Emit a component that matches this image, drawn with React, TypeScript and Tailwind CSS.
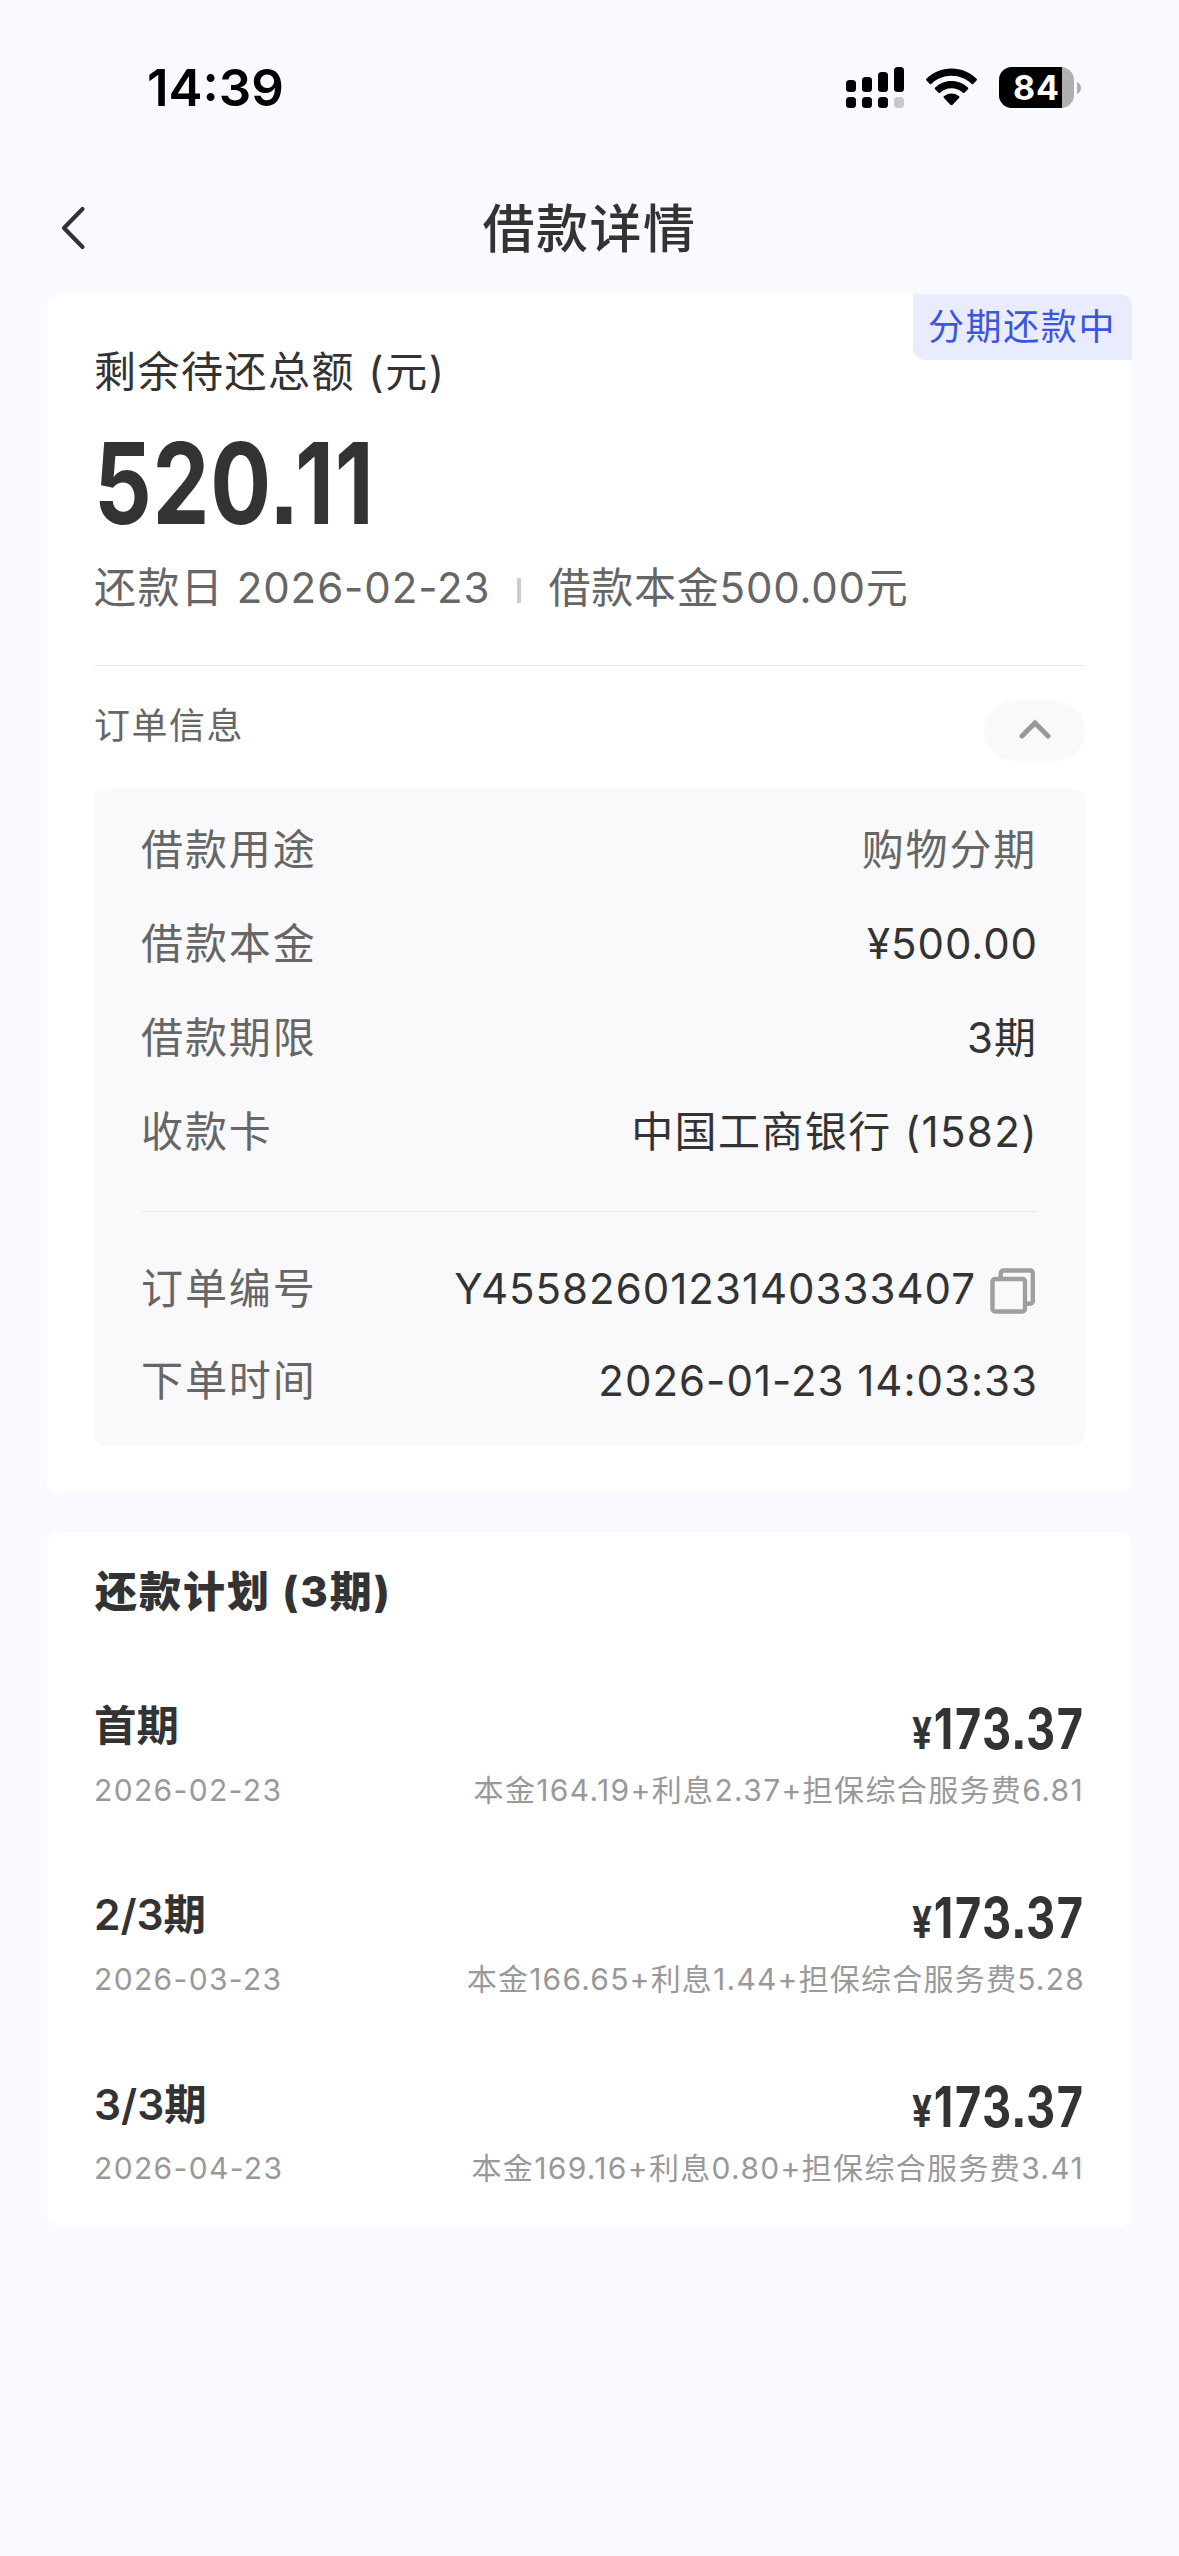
import React from "react";

type Plan = { term: string; date: string; desc: string; descTracking: string };

const loanRows = [
  { label: "借款用途", value: "购物分期", tone: "text-[#666] tracking-[1.8px] pr-[1px]" },
  { label: "借款本金", value: "¥500.00", tone: "text-[#333] tracking-[0.9px]" },
  { label: "借款期限", value: "3期", tone: "text-[#333] tracking-[1px] pr-[1px]" },
  { label: "收款卡", value: "中国工商银行 (1582)", tone: "text-[#333] tracking-[1.4px]" },
];

const plans: Plan[] = [
  { term: "首期", date: "2026-02-23", desc: "本金164.19+利息2.37+担保综合服务费6.81", descTracking: "tracking-[1.36px] pr-[1px]" },
  { term: "2/3期", date: "2026-03-23", desc: "本金166.65+利息1.44+担保综合服务费5.28", descTracking: "tracking-[1.22px]" },
  { term: "3/3期", date: "2026-04-23", desc: "本金169.16+利息0.80+担保综合服务费3.41", descTracking: "tracking-[1.34px] pr-[1px]" },
];

function SignalIcon() {
  return (
    <svg width="58" height="41" viewBox="0 0 58 41" fill="#000">
      <rect x="0" y="13" width="10" height="12" rx="3.5" />
      <rect x="16" y="10" width="10" height="15" rx="3.5" />
      <rect x="32" y="5" width="10" height="20" rx="3.5" />
      <rect x="48" y="0" width="10" height="25" rx="3.5" />
      <rect x="0" y="30" width="10" height="11" rx="3.5" />
      <rect x="16" y="30" width="10" height="11" rx="3.5" />
      <rect x="32" y="30" width="10" height="11" rx="3.5" />
      <rect x="48" y="30" width="10" height="11" rx="3.5" fill="#c8c8cb" />
    </svg>
  );
}

function WifiIcon() {
  return (
    <svg width="51" height="38" viewBox="0 0 51 38" fill="#000">
      <path d="M25.5 0.5C35.3 0.5 44.2 4.4 50.6 10.7C51.1 11.2 51.1 11.8 50.7 12.3L47.2 15.9C46.8 16.3 46.2 16.3 45.7 15.9C40.4 10.8 33.3 7.8 25.5 7.8C17.7 7.8 10.6 10.8 5.3 15.9C4.8 16.3 4.2 16.3 3.8 15.9L0.3 12.3C-0.1 11.8 -0.1 11.2 0.4 10.7C6.8 4.4 15.7 0.5 25.5 0.5Z" />
      <path d="M25.5 13C31.9 13 37.6 15.5 41.9 19.6C42.4 20.1 42.4 20.7 42 21.2L38.4 24.8C38 25.2 37.4 25.2 36.9 24.8C33.9 22 29.9 20.3 25.5 20.3C21.1 20.3 17.1 22 14.1 24.8C13.6 25.2 13 25.2 12.6 24.8L9 21.2C8.6 20.7 8.6 20.1 9.1 19.6C13.4 15.5 19.1 13 25.5 13Z" />
      <path d="M25.5 25.4C28.4 25.4 31.1 26.5 33.1 28.3C33.6 28.8 33.6 29.4 33.2 29.8L26.4 36.9C25.9 37.4 25.1 37.4 24.6 36.9L17.8 29.8C17.4 29.4 17.4 28.8 17.9 28.3C19.9 26.5 22.6 25.4 25.5 25.4Z" />
    </svg>
  );
}

function Battery() {
  return (
    <div className="flex items-center">
      <div className="flex h-[41px] w-[75px] overflow-hidden rounded-[13px] bg-[#b0b0b1]">
        <div className="h-full w-[63px] bg-black pl-[14px] text-[34px] leading-[42px] font-bold tracking-[0.8px] text-white">84</div>
      </div>
      <svg width="4" height="12" viewBox="0 0 4 12" className="ml-[3px]">
        <path d="M0 0C2.6 1 4 3.4 4 6C4 8.6 2.6 11 0 12Z" fill="#b0b0b1" />
      </svg>
    </div>
  );
}

function StatusBar() {
  return (
    <div className="flex h-[175px] items-start pt-[67px] pl-[147px]">
      <div className="h-[41px] w-[699px] text-[51px] leading-[42px] font-semibold text-black">14:39</div>
      <SignalIcon />
      <div className="ml-[22px] pt-[1px]"><WifiIcon /></div>
      <div className="ml-[22px]"><Battery /></div>
    </div>
  );
}

function CopyIcon() {
  return (
    <svg width="46" height="46" viewBox="0 0 46 46" fill="none" stroke="#9f9f9f" strokeWidth="4.4" strokeLinejoin="round">
      <path d="M10.7 10.5V5a2.5 2.5 0 0 1 2.5-2.5H40.3a2.5 2.5 0 0 1 2.5 2.5V33.3a2.5 2.5 0 0 1-2.5 2.5H35.5" />
      <rect x="2.5" y="11" width="32.5" height="32.5" rx="2.5" />
    </svg>
  );
}

function PlanRow({ plan }: { plan: Plan }) {
  return (
    <div className="h-[189.4px]">
      <div className="flex h-[60px] items-center justify-between">
        <div className="text-[42.5px] leading-[60px] font-semibold">{plan.term}</div>
        <div className="flex origin-right scale-x-[0.8] items-baseline pt-[5px] font-bold [font-feature-settings:'ss07']">
          <span className="mr-[2px] text-[44px] leading-none">¥</span>
          <span className="text-[56.5px] leading-[60px] tracking-[2px]">
            173<span className="-ml-[2px] tracking-[-0.5px]">.</span>37
          </span>
        </div>
      </div>
      <div className="mt-[4px] flex h-[60px] items-center justify-between text-[30px] text-[#999]">
        <div className="tracking-[1.35px]">{plan.date}</div>
        <div className={plan.descTracking}>{plan.desc}</div>
      </div>
    </div>
  );
}

export default function App() {
  return (
    <div className="h-[2556px] w-[1179px] overflow-hidden bg-[#f9faff] text-[#333] font-['Inter','Noto_Sans_CJK_SC',sans-serif]">
      <StatusBar />

      <header className="grid h-[119px] grid-cols-[120px_1fr_120px] items-start pt-[15px]">
        <svg width="26" height="44" viewBox="0 0 26 44" fill="none" stroke="#333" strokeWidth="4.2" strokeLinecap="round" strokeLinejoin="round" className="mt-[16px] ml-[60px]">
          <path d="M22.5 3L4 22L22.5 41" />
        </svg>
        <h1 className="text-center text-[52px] leading-[80px] font-medium tracking-[1.5px]">借款详情</h1>
      </header>

      <section className="relative mx-[47px] h-[1199px] rounded-[12px] bg-white px-[47px] pt-[47px]">
        <div className="absolute top-0 right-0 h-[66px] w-[219px] rounded-tr-[12px] rounded-bl-[12px] bg-[#e9ecfd] pl-[15px] text-[36px] leading-[66px] tracking-[1.6px] text-[#3b55dd]">
          分期还款中
        </div>
        <div className="h-[60px] text-[42px] leading-[61px] tracking-[1.5px]">剩余待还总额 (元)</div>
        <div className="mt-[17px] h-[130px] origin-left scale-x-[0.8] text-[113px] leading-[130px] font-bold tracking-[1px] [font-feature-settings:'ss07']">
          520<span className="-ml-[4px] tracking-[-5px]">.</span>11
        </div>
        <div className="mt-[10px] flex h-[60px] items-center text-[42px] leading-[60px] text-[#666]">
          <span className="tracking-[1.4px]">还款日</span>
          <span className="ml-[12.5px] tracking-[0.9px]">2026-02-23</span>
          <span className="mt-[4px] ml-[27px] h-[25px] w-[4px] bg-[#ccc]" />
          <span className="ml-[27px] tracking-[0.8px]">借款本金500.00元</span>
        </div>
        <div className="mt-[47px] h-px bg-[#ebebed]" />

        <div className="flex h-[123px] items-start justify-between">
          <div className="mt-[30px] text-[36px] leading-[60px] tracking-[1.5px] text-[#666]">订单信息</div>
          <div className="mt-[35px] flex h-[60px] w-[101px] items-center justify-center rounded-full bg-[#f9f9fb]">
            <svg width="32" height="20" viewBox="0 0 32 20" fill="none" stroke="#999" strokeWidth="5" strokeLinecap="round" strokeLinejoin="miter" className="mt-[-4px]">
              <path d="M3 17L16 4L29 17" />
            </svg>
          </div>
        </div>

        <div className="h-[657px] rounded-[12px] bg-[#f9f9fb] px-[47px] pt-[14px] text-[42px] leading-[60px]">
          {loanRows.map((row) => (
            <div key={row.label} className="flex h-[94px] items-center justify-between">
              <span className="tracking-[1.9px] text-[#666]">{row.label}</span>
              <span className={row.tone}>{row.value}</span>
            </div>
          ))}
          <div className="mt-[32px] mb-[31px] h-px bg-[#ebebed]" />
          <div className="flex h-[92px] items-center justify-between">
            <span className="tracking-[1.9px] text-[#666]">订单编号</span>
            <span className="flex items-center pr-[2px]">
              <span className="mr-[14px] tracking-[1px]">Y4558260123140333407</span>
              <span className="pt-[3px]"><CopyIcon /></span>
            </span>
          </div>
          <div className="flex h-[92px] items-center justify-between">
            <span className="tracking-[1.9px] text-[#666]">下单时间</span>
            <span className="tracking-[1px]">2026-01-23 14:03:33</span>
          </div>
        </div>
      </section>

      <section className="mx-[47px] mt-[39px] h-[694px] rounded-[12px] bg-white px-[47px] pt-[30px]">
        <h2 className="pl-[1px] text-[42px] leading-[60px] font-extrabold tracking-[2px]">还款计划 (3期)</h2>
        <div className="pt-[74px]">
          {plans.map((plan) => (
            <PlanRow key={plan.term} plan={plan} />
          ))}
        </div>
      </section>
    </div>
  );
}
